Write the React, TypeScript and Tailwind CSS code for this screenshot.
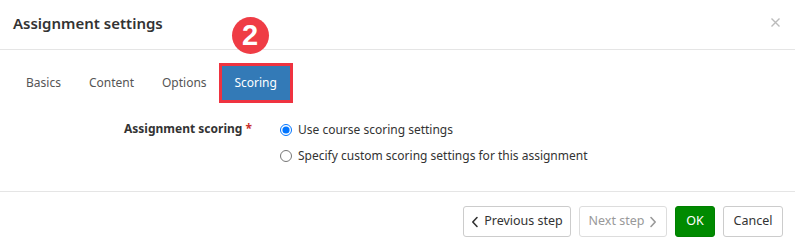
import React from "react";

const font = { fontFamily: '"Noto Sans", "Open Sans", Arial, sans-serif' };

function ChevL() {
  return (
    <svg width="8" height="12" viewBox="0 0 8 12" fill="none" stroke="currentColor" strokeWidth="1.6" strokeLinecap="round" strokeLinejoin="round">
      <path d="M6 1.5 L1.8 6 L6 10.5" />
    </svg>
  );
}
function ChevR() {
  return (
    <svg width="8" height="12" viewBox="0 0 8 12" fill="none" stroke="currentColor" strokeWidth="1.6" strokeLinecap="round" strokeLinejoin="round">
      <path d="M2 1.5 L6.2 6 L2 10.5" />
    </svg>
  );
}

export default function App() {
  return (
    <div className="w-[795px] h-[250px] bg-white text-[#333] overflow-hidden" style={font}>
      <div className="h-[50px] flex items-center justify-between pl-[13px] pr-[15px] border-b border-[#e5e5e5]">
        <div className="text-[15px] font-semibold text-[#333] leading-none pb-[2px]">Assignment settings</div>
        <svg width="9" height="9" viewBox="0 0 9 9" className="mb-[5px]" stroke="#bbb" strokeWidth="1.4">
          <path d="M0.5 0.5 L8.5 8.5 M8.5 0.5 L0.5 8.5" />
        </svg>
      </div>
      <div className="flex items-center pl-[12px] pt-[13px] h-[53px] text-[12px] text-[#555]">
        <div className="px-[14px] leading-[34px]">Basics</div>
        <div className="px-[14px] leading-[34px]">Content</div>
        <div className="pl-[14px] pr-[12px] leading-[34px]">Options</div>
        <div className="relative">
          <div className="border-[3px] border-[#ef3340] w-[74px] h-[40px]">
            <div className="bg-[#337ab7] h-full flex items-center justify-center text-white text-[12px]">Scoring</div>
          </div>
          <div
            className="absolute left-[13px] top-[-46px] w-[37px] h-[37px] rounded-full bg-[#ef3c45] text-white flex items-center justify-center text-[29px] font-bold leading-none"
            style={{ fontFamily: '"Liberation Sans", Arial, sans-serif' }}
          >
            2
          </div>
        </div>
      </div>
      <div className="flex pt-[17px] text-[12px]">
        <div className="w-[253px] text-right pr-[1px] font-bold text-[#333]">
          Assignment scoring <span className="text-[#c9302c]">*</span>
        </div>
        <div className="pl-[27px] flex flex-col gap-[7px]">
          <label className="flex items-center gap-[6px] h-[19px]">
            <input type="radio" name="s" defaultChecked className="m-0 w-[12px] h-[12px] accent-[#0075ff]" />
            <span>Use course scoring settings</span>
          </label>
          <label className="flex items-center gap-[6px] h-[19px]">
            <input type="radio" name="s" className="m-0 w-[12px] h-[12px]" />
            <span>Specify custom scoring settings for this assignment</span>
          </label>
        </div>
      </div>
      <div className="mt-[26px] border-t border-[#e5e5e5] flex justify-end gap-[8px] pr-[12px] pt-[14px] text-[12.5px]">
        <button className="h-[31px] w-[108px] flex items-center justify-center gap-[5px] border border-[#ccc] rounded-[3px] bg-white text-[#333]">
          <ChevL />
          <span>Previous step</span>
        </button>
        <button className="h-[31px] w-[88px] flex items-center justify-center gap-[5px] border border-[#ddd] rounded-[3px] bg-white text-[#999]">
          <span>Next step</span>
          <ChevR />
        </button>
        <button className="h-[31px] w-[40px] flex items-center justify-center rounded-[3px] bg-[#008a00] border border-[#008000] text-white">
          OK
        </button>
        <button className="h-[31px] w-[60px] flex items-center justify-center border border-[#ccc] rounded-[3px] bg-white text-[#333]">
          Cancel
        </button>
      </div>
    </div>
  );
}
